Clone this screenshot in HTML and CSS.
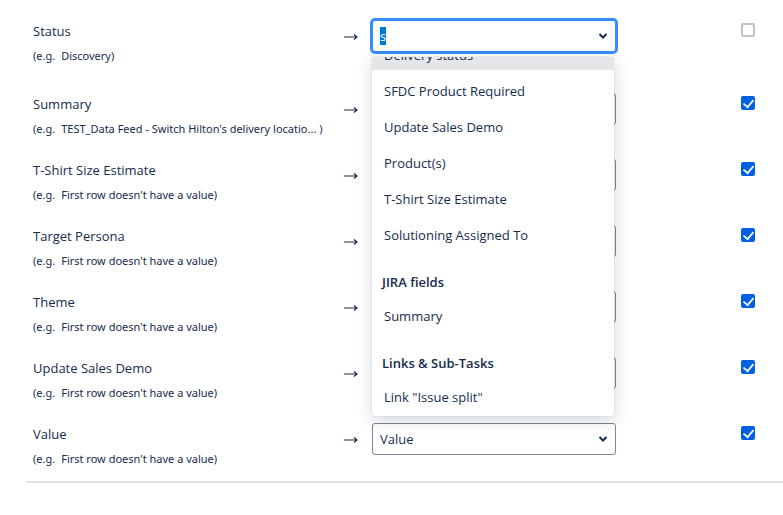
FILE: index.html
```html
<!DOCTYPE html>
<html lang="en">
<head>
    <meta charset="utf-8">
    <title>Field mapping</title>
    <link rel="stylesheet" href="styles.css">
</head>
<body>
    <form class="mapping">
        <div class="row active">
            <div class="field">
                <label class="name" for="map-status">Status</label>
                <p class="example"><span>(e.g.</span> <span>Discovery)</span></p>
            </div>
            <svg class="arrow" viewBox="0 0 16 8"><path d="M1 4H14M11 1.5L14 4L11 6.5"/></svg>
            <div class="picker open">
                <input class="control" id="map-status" type="text" role="combobox" aria-expanded="true" aria-controls="menu" value="s" autocomplete="off">
                <svg class="chevron" viewBox="0 0 10 8"><path d="M1.5 2L5 5.5L8.5 2"/></svg>
                <div class="menu" id="menu" role="listbox">
                    <div class="option focused" role="option">Delivery status</div>
                    <div class="option" role="option">SFDC Product Required</div>
                    <div class="option" role="option">Update Sales Demo</div>
                    <div class="option" role="option">Product(s)</div>
                    <div class="option" role="option">T-Shirt Size Estimate</div>
                    <div class="option" role="option">Solutioning Assigned To</div>
                    <div class="group">JIRA fields</div>
                    <div class="option" role="option">Summary</div>
                    <div class="group">Links &amp; Sub-Tasks</div>
                    <div class="option" role="option">Link "Issue split"</div>
                </div>
            </div>
            <input class="check" type="checkbox" aria-label="Map Status">
        </div>

        <div class="row">
            <div class="field">
                <label class="name" for="map-summary">Summary</label>
                <p class="example"><span>(e.g.</span> <span>TEST_Data Feed - Switch Hilton's delivery locatio... )</span></p>
            </div>
            <svg class="arrow" viewBox="0 0 16 8"><path d="M1 4H14M11 1.5L14 4L11 6.5"/></svg>
            <div class="picker">
                <select class="control" id="map-summary"><option></option></select>
            </div>
            <input class="check" type="checkbox" aria-label="Map Summary" checked>
        </div>

        <div class="row">
            <div class="field">
                <label class="name" for="map-size">T-Shirt Size Estimate</label>
                <p class="example"><span>(e.g.</span> <span>First row doesn't have a value)</span></p>
            </div>
            <svg class="arrow" viewBox="0 0 16 8"><path d="M1 4H14M11 1.5L14 4L11 6.5"/></svg>
            <div class="picker">
                <select class="control" id="map-size"><option></option></select>
            </div>
            <input class="check" type="checkbox" aria-label="Map T-Shirt Size Estimate" checked>
        </div>

        <div class="row">
            <div class="field">
                <label class="name" for="map-persona">Target Persona</label>
                <p class="example"><span>(e.g.</span> <span>First row doesn't have a value)</span></p>
            </div>
            <svg class="arrow" viewBox="0 0 16 8"><path d="M1 4H14M11 1.5L14 4L11 6.5"/></svg>
            <div class="picker">
                <select class="control" id="map-persona"><option></option></select>
            </div>
            <input class="check" type="checkbox" aria-label="Map Target Persona" checked>
        </div>

        <div class="row">
            <div class="field">
                <label class="name" for="map-theme">Theme</label>
                <p class="example"><span>(e.g.</span> <span>First row doesn't have a value)</span></p>
            </div>
            <svg class="arrow" viewBox="0 0 16 8"><path d="M1 4H14M11 1.5L14 4L11 6.5"/></svg>
            <div class="picker">
                <select class="control" id="map-theme"><option></option></select>
            </div>
            <input class="check" type="checkbox" aria-label="Map Theme" checked>
        </div>

        <div class="row">
            <div class="field">
                <label class="name" for="map-demo">Update Sales Demo</label>
                <p class="example"><span>(e.g.</span> <span>First row doesn't have a value)</span></p>
            </div>
            <svg class="arrow" viewBox="0 0 16 8"><path d="M1 4H14M11 1.5L14 4L11 6.5"/></svg>
            <div class="picker">
                <select class="control" id="map-demo"><option></option></select>
            </div>
            <input class="check" type="checkbox" aria-label="Map Update Sales Demo" checked>
        </div>

        <div class="row">
            <div class="field">
                <label class="name" for="map-value">Value</label>
                <p class="example"><span>(e.g.</span> <span>First row doesn't have a value)</span></p>
            </div>
            <svg class="arrow" viewBox="0 0 16 8"><path d="M1 4H14M11 1.5L14 4L11 6.5"/></svg>
            <div class="picker">
                <select class="control" id="map-value"><option>Value</option></select>
                <svg class="chevron" viewBox="0 0 10 8"><path d="M1.5 2L5 5.5L8.5 2"/></svg>
            </div>
            <input class="check" type="checkbox" aria-label="Map Value" checked>
        </div>
    </form>

    <script>
        const input = document.getElementById('map-status');
        const menu = document.getElementById('menu');
        menu.scrollTop = menu.scrollHeight;
        input.focus();
        input.select();
    </script>
</body>
</html>
```

FILE: styles.css
```css
* {
    box-sizing: border-box;
}
body {
    margin: 0;
    background-color: #fff;
    color: #172b4d;
    font-family: "Segoe UI", "Open Sans", "Noto Sans", sans-serif;
    font-size: 13px;
    line-height: 20px;
}
.mapping {
    margin: 20px 0 32px 26px;
    padding: 0 0 0 7px;
    border-bottom: 2px solid #dcdfe4;
}
.row {
    display: grid;
    grid-template-columns: 310fr 29fr 244fr 125fr 42fr;
    align-items: start;
    min-height: 66px;
}
.row.active {
    min-height: 73px;
}
.row:last-child {
    min-height: 58px;
}
.row > * {
    min-width: 0;
}
.name {
    display: block;
    height: 26px;
    line-height: 22px;
}
.example {
    display: flex;
    gap: 6px;
    margin: 0;
    font-family: "Segoe UI", "Noto Sans", sans-serif;
    font-size: 11px;
    white-space: nowrap;
}
.arrow {
    width: 16px;
    height: 8px;
    margin-top: 13px;
    fill: none;
    stroke: #172b4d;
    stroke-width: 1.2;
}
.picker {
    position: relative;
}
.control {
    display: block;
    width: 100%;
    height: 32px;
    padding: 0 7px;
    border: 1px solid #7a869a;
    border-radius: 3px;
    background-color: #fff;
    color: inherit;
    font: inherit;
    appearance: none;
    outline: none;
}
.open .control {
    border-color: #388bff;
    box-shadow: 0 0 0 2px #388bff;
}
.control::selection {
    background-color: #0078d7;
    color: #fff;
}
.chevron {
    position: absolute;
    top: 12px;
    right: 8px;
    width: 10px;
    height: 8px;
    fill: none;
    stroke: #172b4d;
    stroke-width: 2;
    pointer-events: none;
}
.menu {
    position: absolute;
    top: 37px;
    left: 0;
    right: 2px;
    z-index: 1;
    max-height: 359px;
    padding-bottom: 4px;
    overflow-y: auto;
    scrollbar-width: none;
    border-radius: 4px;
    background-color: #fff;
    box-shadow: 0 0 1px rgba(9, 30, 66, 0.4), 0 4px 16px rgba(9, 30, 66, 0.18);
}
.option {
    height: 36px;
    padding: 11px 12px 5px;
}
.option.focused {
    background-color: #e4e6ea;
}
.group {
    height: 45px;
    padding: 22px 10px 3px;
    font-weight: 600;
}
.check {
    grid-column: 5;
    display: grid;
    place-items: center;
    width: 14px;
    height: 14px;
    margin: 3px 0 0;
    border: 2px solid #c1c4cb;
    border-radius: 2px;
    background-color: #fff;
    appearance: none;
}
.check:checked {
    border-color: #0060df;
    background-color: #0060df;
}
.check:checked::before {
    content: "";
    width: 9px;
    height: 5px;
    margin-bottom: 2px;
    border: solid #fff;
    border-width: 0 0 2px 2px;
    transform: rotate(-50deg) scale(0.9);
}
```
